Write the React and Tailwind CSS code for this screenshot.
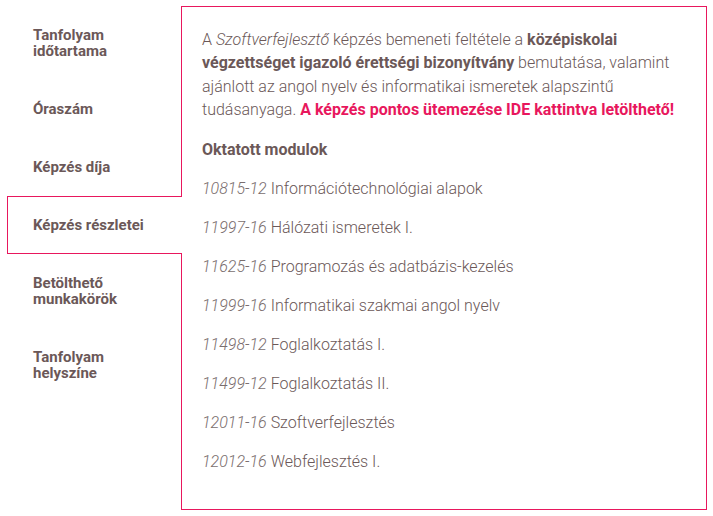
import React from 'react'

const tabs = [
    { label: ['Tanfolyam', 'időtartama'] },
    { label: ['Óraszám'] },
    { label: ['Képzés díja'] },
    { label: ['Képzés részletei'], active: true },
    { label: ['Betölthető', 'munkakörök'] },
    { label: ['Tanfolyam', 'helyszíne'] },
];

const modules = [
    ['10815-12', 'Információtechnológiai alapok'],
    ['11997-16', 'Hálózati ismeretek I.'],
    ['11625-16', 'Programozás és adatbázis-kezelés'],
    ['11999-16', 'Informatikai szakmai angol nyelv'],
    ['11498-12', 'Foglalkoztatás I.'],
    ['11499-12', 'Foglalkoztatás II.'],
    ['12011-16', 'Szoftverfejlesztés'],
    ['12012-16', 'Webfejlesztés I.'],
];

export default function App() {
    return (
        <div className="min-h-[516px] bg-white pl-[7px] pt-[6px] font-['Roboto',sans-serif] text-[#6b5858]">
            <div className="flex items-start">
                <ul className="w-[175px] -mr-[1px] shrink-0">
                    {tabs.map((t, i) => (
                        <li
                            key={i}
                            className={`relative pl-[25px] pr-3 py-[20px] border-y border-l text-[15px] leading-[16px] font-bold ${t.active ? 'z-10 bg-white border-[#e8175d]' : 'border-transparent'}`}
                        >
                            {t.label.map((l, j) => (
                                <div key={j}>{l}</div>
                            ))}
                        </li>
                    ))}
                </ul>
                <div className="w-[526px] border border-[#e8175d] px-[20px] pt-[21px] pb-[20px] text-[16px] leading-[23px] font-light">
                    <p className="mb-[16px] leading-[23.4px]">
                        A <em>Szoftverfejlesztő</em> képzés bemeneti feltétele a <strong className="font-bold">középiskolai végzettséget igazoló érettségi bizonyítvány</strong> bemutatása, valamint ajánlott az angol nyelv és informatikai ismeretek alapszintű tudásanyaga. <a className="font-bold text-[#e8175d]">A képzés pontos ütemezése IDE kattintva letölthető!</a>
                    </p>
                    <p className="mb-[16px] font-bold">Oktatott modulok</p>
                    {modules.map(([code, name]) => (
                        <p key={code} className="mb-[16px]">
                            <em className="text-[#7a6e6e]">{code}</em> {name}
                        </p>
                    ))}
                </div>
            </div>
        </div>
    );
}
